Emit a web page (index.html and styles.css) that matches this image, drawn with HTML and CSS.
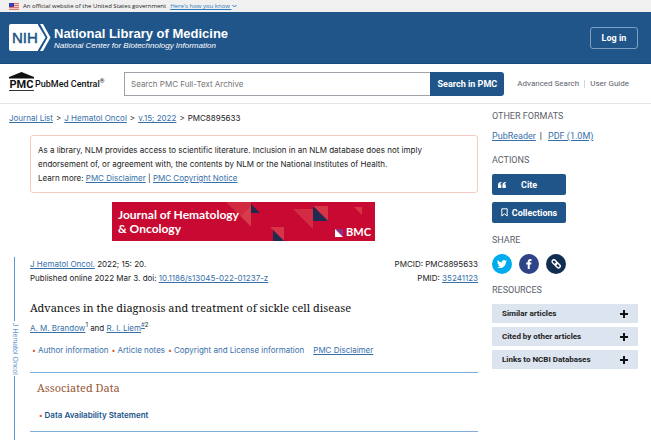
FILE: index.html
```html
<!DOCTYPE html>
<html lang="en">
<head>
    <meta charset="UTF-8">
    <title>Advances in the diagnosis and treatment of sickle cell disease - PMC</title>
    <link rel="stylesheet" href="styles.css">
</head>
<body>
<div class="gov-banner">
    <svg class="flag" viewBox="0 0 10 7" width="10" height="7">
        <rect width="10" height="7" fill="#f3c9c4"/>
        <path d="M0 0h10v1H0zM0 2h10v1H0zM0 4h10v1H0zM0 6h10v1H0z" fill="#e0796c"/>
        <rect width="5" height="4" fill="#3c3fae"/>
    </svg>
    <span>An official website of the United States government</span>
    <a href="#" class="know">Here's how you know
        <svg viewBox="0 0 5 4" width="5" height="4"><path d="M.5 1l2 2 2-2" fill="none" stroke="#2b7bbd"/></svg>
    </a>
</div>

<header class="nlm-header">
    <a href="#" class="nlm-logo">
        <svg viewBox="0 0 42 27" width="42" height="27">
            <path d="M2 0h27l8 13.500-8 13.500H2a2 2 0 0 1-2-2V2a2 2 0 0 1 2-2z" fill="#fff"/>
            <path d="M31 0h3l7.500 13.500L34 27h-3l7.500-13.500z" fill="#fff"/>
            <path d="M29.500 0l8 13.500-8 13.500" fill="none" stroke="#20558a" stroke-width="1.500"/>
            <text x="3" y="19" class="nih">NIH</text>
        </svg>
        <span class="nlm-name">
            <strong>National Library of Medicine</strong>
            <em>National Center for Biotechnology Information</em>
        </span>
    </a>
    <button type="button" class="login">Log in</button>
</header>

<div class="search-bar">
    <a href="#" class="pmc-logo">
        <span class="pmc">
            <svg viewBox="0 0 25 7" width="25" height="7"><path d="M12.500 0L25 5v1.500H0V5z" fill="#111"/></svg>
            <b>PMC</b>
        </span>
        <span class="central">PubMed Central<sup>®</sup></span>
    </a>
    <form class="search-form">
        <input type="text" placeholder="Search PMC Full-Text Archive" aria-label="Search PMC Full-Text Archive">
        <button type="button">Search in PMC</button>
    </form>
    <nav class="search-links">
        <a href="#">Advanced Search</a>
        <a href="#">User Guide</a>
    </nav>
</div>

<div class="page">
    <main>
        <nav class="breadcrumb">
            <a href="#">Journal List</a><span>&gt;</span><a href="#">J Hematol Oncol</a><span>&gt;</span><a href="#">v.15; 2022</a><span>&gt;</span>PMC8895633
        </nav>
        <div class="notice">
            As a library, NLM provides access to scientific literature. Inclusion in an NLM database does not imply endorsement of, or agreement with, the contents by NLM or the National Institutes of Health.<br>
            Learn more: <a href="#">PMC Disclaimer</a> | <a href="#">PMC Copyright Notice</a>
        </div>
        <a href="#" class="journal-banner">
            <svg class="shapes" viewBox="0 0 263 39" width="263" height="39">
                <path d="M114 0h25v25z" fill="#d12a41"/>
                <path d="M129 14l10-10v20z" fill="#d63d4c"/>
                <path d="M139 2l9 9h-9z" fill="#1f2b50"/>
                <path d="M158 25h14v14z" fill="#d63547"/>
                <path d="M161 28l11 11h-11z" fill="#1f2b50"/>
                <path d="M181 7h20v20z" fill="#d32c42"/>
                <path d="M201 4h15v15z" fill="#d63547"/>
                <path d="M201 4l15 15h-15z" fill="#1f2b50"/>
                <path d="M242 5h8v8z" fill="#d63547"/>
                <path d="M223 27h8v8z" fill="#8d2f8f"/>
                <path d="M223 27l8 8h-8z" fill="#fff"/>
            </svg>
            <span class="journal-name">Journal of Hematology<br>&amp; Oncology</span>
            <span class="bmc">BMC</span>
        </a>

        <div class="article">
            <div class="side-rail"><span>J Hematol Oncol</span></div>
            <article>
                <div class="citation">
                    <div>
                        <a href="#">J Hematol Oncol.</a> 2022; 15: 20.<br>
                        Published online 2022 Mar 3. doi: <a href="#">10.1186/s13045-022-01237-z</a>
                    </div>
                    <div class="ids">
                        PMCID: PMC8895633<br>
                        PMID: <a href="#">35241123</a>
                    </div>
                </div>
                <h1>Advances in the diagnosis and treatment of sickle cell disease</h1>
                <div class="authors"><a href="#">A. M. Brandow</a><sup>1</sup> and <a href="#">R. I. Liem</a><sup><a href="#">#</a>2</sup></div>
                <div class="info">
                    <a href="#" class="dot">Author information</a>
                    <a href="#" class="dot">Article notes</a>
                    <a href="#" class="dot">Copyright and License information</a>
                    <a href="#" class="disclaimer">PMC Disclaimer</a>
                </div>
                <section class="assoc">
                    <h2>Associated Data</h2>
                    <a href="#" class="dot">Data Availability Statement</a>
                </section>
            </article>
        </div>
    </main>

    <aside>
        <h3>OTHER FORMATS</h3>
        <div class="formats"><a href="#">PubReader</a><span>|</span><a href="#">PDF (1.0M)</a></div>
        <h3>ACTIONS</h3>
        <div class="actions">
            <button type="button" class="cite">
                <svg viewBox="0 0 8 6" width="8" height="6"><path d="M3.500 0v1C2.500 1.200 2 1.700 2 2.500h1.300V6H0V3C0 1.200 1.200 0 3.500 0zM8 0v1C7 1.200 6.500 1.700 6.500 2.500h1.300V6H4.500V3C4.500 1.200 5.700 0 8 0z" fill="#fff"/></svg>
                <span>Cite</span>
            </button>
            <button type="button">
                <svg viewBox="0 0 7 9" width="7" height="9"><path d="M.8.8h5.400v7.200L3.500 5.800.8 8z" fill="none" stroke="#fff"/></svg>
                <span>Collections</span>
            </button>
        </div>
        <h3>SHARE</h3>
        <div class="share">
            <a href="#" class="tw" aria-label="Twitter">
                <svg viewBox="0 0 24 24" width="10" height="10"><path d="M24 4.600a10 10 0 0 1-2.800.8 5 5 0 0 0 2.100-2.700 10 10 0 0 1-3.100 1.200 4.900 4.900 0 0 0-8.400 4.500A14 14 0 0 1 1.700 3.100a4.900 4.900 0 0 0 1.500 6.600 5 5 0 0 1-2.200-.6 4.900 4.900 0 0 0 3.900 4.900 5 5 0 0 1-2.200.1 4.900 4.900 0 0 0 4.600 3.400A10 10 0 0 1 0 19.500a14 14 0 0 0 21.500-12.400A10 10 0 0 0 24 4.600z" fill="#fff"/></svg>
            </a>
            <a href="#" class="fb" aria-label="Facebook">
                <svg viewBox="0 0 12 20" width="6" height="10"><path d="M11 0v4H9c-1.300 0-1.500.6-1.500 1.500V7H11l-.5 3.800h-3V20h-4v-9.200H.5V7h3V5C3.500 1.800 5.400 0 8.200 0z" fill="#fff"/></svg>
            </a>
            <a href="#" class="lk" aria-label="Permalink">
                <svg viewBox="0 0 20 20" width="10" height="10"><g fill="none" stroke="#fff" stroke-width="2.800" transform="rotate(45 10 10)"><rect x="0" y="6" width="11" height="7" rx="3.500"/><rect x="9" y="6" width="11" height="7" rx="3.500"/></g></svg>
            </a>
        </div>
        <h3>RESOURCES</h3>
        <div class="resources">
            <button type="button">Similar articles <i></i></button>
            <button type="button">Cited by other articles <i></i></button>
            <button type="button">Links to NCBI Databases <i></i></button>
        </div>
    </aside>
</div>
</body>
</html>
```
FILE: styles.css
```css
*{
    margin: 0;
    padding: 0;
    box-sizing: border-box;
}
body{
    display: flex;
    flex-direction: column;
    height: 100vh;
    overflow: hidden;
    background-color: #fff;
    color: #222;
    font: 8px/14px Inter, "Liberation Sans", sans-serif;
}
a{
    color: #376fa9;
}
button{
    border: none;
    color: #fff;
    background-color: #20558a;
    font: bold 9px/12px Roboto, sans-serif;
}
svg{
    flex: none;
}
.gov-banner{
    display: flex;
    align-items: center;
    height: 12px;
    padding-left: 9px;
    background-color: #f0f0f0;
    color: #222;
    font: 6px/12px "Open Sans", sans-serif;
}
.flag{
    margin-right: 4px;
}
.know{
    margin-left: 4px;
    color: #2b7bbd;
}
.nlm-header{
    display: flex;
    justify-content: space-between;
    align-items: center;
    height: 52px;
    padding: 0 13px 0 9px;
    background-color: #20558a;
    border-bottom: 1px solid #174b80;
}
.nlm-logo{
    display: flex;
    align-items: center;
    gap: 3px;
    color: #fff;
    text-decoration: none;
}
.nih{
    font: 15px "Liberation Sans", Arial, sans-serif;
    fill: #20558a;
    stroke: #20558a;
    stroke-width: .5;
}
.nlm-name{
    padding-top: 3px;
    font-family: "Liberation Sans", Arial, sans-serif;
}
.nlm-name strong{
    display: block;
    font-size: 13px;
}
.nlm-name em{
    display: block;
    font-size: 8px;
    line-height: 10px;
}
.login{
    width: 48px;
    height: 22px;
    border: 1px solid #7f9fc0;
    border-radius: 3px;
}
.search-bar{
    display: flex;
    align-items: center;
    height: 40px;
    padding: 0 22px 0 9px;
    border-bottom: 1px solid #e4e4e4;
    font-family: Roboto, sans-serif;
}
.pmc-logo{
    display: flex;
    align-items: center;
    width: 115px;
    gap: 1px;
    color: #111;
    text-decoration: none;
}
.pmc{
    display: flex;
    flex-direction: column;
    margin-bottom: 4px;
    border-bottom: 1px solid #333;
}
.pmc b{
    font-size: 11px;
    line-height: 11px;
    text-align: center;
}
.central{
    font-size: 9px;
    font-weight: 500;
}
.central sup{
    font-size: 6px;
    line-height: 1px;
}
.search-form{
    display: flex;
    flex: 1;
    height: 24px;
}
.search-form input{
    flex: 1;
    min-width: 0;
    padding: 0 6px;
    border: 1px solid #a0a4aa;
    border-right: none;
    font: 8px Inter, sans-serif;
}
.search-form input::placeholder{
    color: #757575;
}
.search-form button{
    width: 74px;
    border-radius: 0 3px 3px 0;
}
.search-links{
    display: flex;
    margin-left: 13px;
    font-size: 8px;
    line-height: 8px;
}
.search-links a{
    color: #5b616b;
    text-decoration: none;
}
.search-links a + a{
    margin-left: 5px;
    padding-left: 5px;
    border-left: 1px solid #d6d7d9;
}
.page{
    display: grid;
    grid-template-columns: 1fr 146px;
    flex: 1;
    gap: 14px;
    min-height: 0;
    padding: 0 13px 0 9px;
}
main{
    display: flex;
    flex-direction: column;
    min-height: 0;
}
.breadcrumb{
    padding: 7px 0 10px;
}
.breadcrumb span{
    margin: 0 3px;
}
.notice{
    margin-left: 21px;
    padding: 7px 50px 7px 7px;
    border: 1px solid #f4cdbf;
    border-radius: 3px;
}
.journal-banner{
    display: flex;
    position: relative;
    align-self: center;
    width: 263px;
    height: 39px;
    margin-top: 9px;
    background-color: #c80a32;
    color: #fff;
    text-decoration: none;
    font-family: Lato, sans-serif;
    font-weight: bold;
}
.shapes{
    position: absolute;
    top: 0;
    left: 0;
}
.journal-name{
    position: relative;
    padding: 6px;
    font-size: 12px;
    line-height: 14px;
}
.bmc{
    position: relative;
    margin: auto 4px 2px auto;
    font-size: 11px;
}
.article{
    display: flex;
    flex: 1;
    margin-top: 16px;
}
.side-rail{
    display: flex;
    flex-direction: column;
    align-items: center;
    gap: 2px;
    width: 11px;
    margin-right: 10px;
    color: #5b97cc;
    font: 7px/8px "Liberation Sans", Arial, sans-serif;
}
.side-rail span{
    writing-mode: vertical-rl;
}
.side-rail:before, .side-rail:after{
    content: "";
    width: 1px;
    flex: 1;
    background-color: #5b97cc;
}
article{
    flex: 1;
}
.citation{
    display: flex;
    justify-content: space-between;
}
.ids{
    text-align: right;
}
h1{
    margin: 14px 0 4px;
    color: #111;
    font: 11px/18px "Noto Serif", "Liberation Serif", serif;
}
sup{
    font-size: 6px;
    line-height: 1px;
}
.info{
    display: flex;
    padding: 8px 0 14px;
}
.info a{
    margin-right: 1px;
}
.dot{
    text-decoration: none;
}
.dot:before{
    content: "•";
    margin: 0 2px;
    color: #d35a33;
    font-size: 7px;
}
.info .disclaimer{
    margin-left: 8px;
}
.assoc{
    padding: 6px 7px 8px;
    border-top: 1px solid #7fb0dc;
    border-bottom: 1px solid #7fb0dc;
    font-weight: 600;
}
.assoc .dot{
    color: #20558a;
}
h2{
    margin-bottom: 11px;
    color: #985735;
    font: 11px/18px "Noto Serif", "Liberation Serif", serif;
}
aside{
    font: 9px/14px Roboto, sans-serif;
    padding-top: 5px;
}
h3{
    color: #5b616b;
    font-size: 9px;
    font-weight: normal;
}
.formats{
    padding: 6px 0 10px;
}
.formats span{
    margin: 0 6px 0 4px;
}
.actions{
    display: flex;
    flex-direction: column;
    gap: 7px;
    width: 74px;
    padding: 7px 0 10px;
}
.actions button{
    display: flex;
    align-items: center;
    justify-content: center;
    gap: 4px;
    height: 21px;
    border-radius: 2px;
}
.actions .cite{
    justify-content: flex-start;
    gap: 15px;
    padding-left: 6px;
}
.share{
    display: flex;
    gap: 7px;
    padding: 7px 0 9px;
}
.share a{
    display: flex;
    align-items: center;
    justify-content: center;
    width: 20px;
    height: 20px;
    border-radius: 50%;
}
.tw{
    background-color: #00acee;
}
.fb{
    background-color: #2f4487;
}
.lk{
    background-color: #112e51;
}
.resources{
    display: flex;
    flex-direction: column;
    gap: 4px;
    padding-top: 7px;
}
.resources button{
    display: flex;
    align-items: center;
    justify-content: space-between;
    height: 19px;
    padding: 0 10px;
    background-color: #dce4ef;
    color: #212121;
    font-size: 8px;
}
/* plus sign */
.resources i{
    width: 8px;
    height: 8px;
    background: linear-gradient(#111, #111) center/8px 2px no-repeat, linear-gradient(#111, #111) center/2px 8px no-repeat;
}
```
